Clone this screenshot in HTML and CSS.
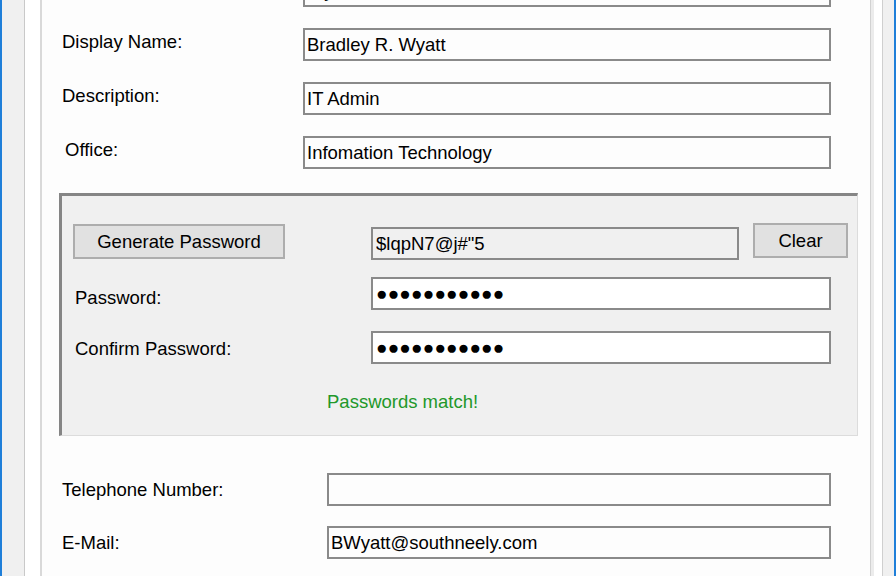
FILE: index.html
```html
<!DOCTYPE html>
<html lang="en">
<head>
<meta charset="utf-8">
<title>New User</title>
<link rel="stylesheet" href="styles.css">
</head>
<body>
<div class="window">
  <div class="frame-left">
    <div class="accent"></div>
    <div class="side"></div>
    <div class="gutter"></div>
  </div>
  <main class="client">
    <div class="row row-top">
      <div class="lbl lbl-up"></div>
      <input class="tb" type="text" value="Wyatt" readonly>
    </div>
    <div class="row">
      <label class="lbl lbl-up">Display Name:</label>
      <input class="tb" type="text" value="Bradley R. Wyatt" readonly>
    </div>
    <div class="row">
      <label class="lbl lbl-up">Description:</label>
      <input class="tb" type="text" value="IT Admin" readonly>
    </div>
    <div class="row">
      <label class="lbl lbl-up lbl-office">Office:</label>
      <input class="tb" type="text" value="Infomation Technology" readonly>
    </div>

    <section class="group">
      <div class="gen-row">
        <button class="btn btn-gen" type="button">Generate Password</button>
        <input class="tb tb-gen" type="text" value="$lqpN7@j#&quot;5" readonly>
        <button class="btn btn-clear" type="button">Clear</button>
      </div>
      <div class="pw-row">
        <label class="lbl-pw lbl-pw1">Password:</label>
        <div class="tb tb-pw">●●●●●●●●●●●</div>
      </div>
      <div class="pw-row pw-row2">
        <label class="lbl-pw lbl-pw2">Confirm Password:</label>
        <div class="tb tb-pw">●●●●●●●●●●●</div>
      </div>
      <p class="match">Passwords match!</p>
    </section>

    <div class="row row-low row-tel">
      <label class="lbl lbl-low">Telephone Number:</label>
      <input class="tb tb-low" type="text" value="" readonly>
    </div>
    <div class="row row-low">
      <label class="lbl lbl-low">E-Mail:</label>
      <input class="tb tb-low" type="text" value="BWyatt@southneely.com" readonly>
    </div>
  </main>
  <div class="frame-right">
    <div class="rail"></div>
    <div class="gap"></div>
    <div class="side side-r"></div>
    <div class="accent"></div>
  </div>
</div>
</body>
</html>
```
FILE: styles.css
```css
html, body {
  margin: 0;
  padding: 0;
  background: #ffffff;
}

body {
  width: 896px;
  height: 576px;
  overflow: hidden;
  font-family: "Liberation Sans", Arial, sans-serif;
  font-size: 18.5px;
  color: #000;
}

.window {
  display: flex;
  width: 896px;
  height: 576px;
  overflow: hidden;
}

/* window frame */
.frame-left,
.frame-right {
  display: flex;
  flex: none;
  height: 100%;
}

.accent {
  width: 2px;
  background: #1f7fd9;
}

.side {
  width: 22px;
  background: #f0f0f0;
  border-right: 1px solid #c9c9c9;
}

.gutter {
  width: 15px;
  background: #ffffff;
  border-right: 2px solid #d9d9d9;
}

.rail {
  width: 3px;
  background: #ececec;
  border-left: 1px solid #d2d2d2;
}

.gap {
  width: 8px;
  background: #ffffff;
}

.side-r {
  width: 11px;
  border-right: none;
  border-left: 1px solid #cfcfcf;
}

/* client area */
.client {
  flex: 1;
  display: flex;
  flex-direction: column;
  background: #fdfdfd;
  min-width: 0;
}

.row {
  display: flex;
  align-items: center;
  height: 33px;
  padding-left: 20px;
  margin-bottom: 21px;
  flex: none;
}

.row-top {
  margin-top: -26px;
}

.lbl {
  width: 241px;
  flex: none;
  line-height: 21px;
  min-height: 21px;
}

.lbl-up {
  margin-bottom: 7px;
}

.lbl-office {
  padding-left: 3px;
  width: 238px;
}

.tb {
  box-sizing: border-box;
  height: 33px;
  width: 528px;
  margin: 0;
  padding: 0 2px;
  border: 2px solid #8a8a8a;
  background: #fdfdfd;
  font: inherit;
  color: #000;
  outline: none;
  flex: none;
}

/* password group box */
.group {
  box-sizing: border-box;
  margin: 3px 12px 0 17px;
  height: 243px;
  padding: 27px 8px 0 11px;
  background: #f0f0f0;
  border-style: solid;
  border-width: 3px 1px 1px 3px;
  border-color: #858585 #dcdcdc #dcdcdc #858585;
  flex: none;
}

.gen-row {
  display: flex;
  align-items: flex-start;
  height: 37px;
}

.btn {
  box-sizing: border-box;
  height: 35px;
  margin: 0;
  padding: 0;
  border: 2px solid #adadad;
  background: #e1e1e1;
  font: inherit;
  color: #000;
  flex: none;
}

.btn-gen {
  width: 212px;
  margin-top: 1px;
}

.tb-gen {
  width: 368px;
  margin-left: 86px;
  margin-top: 4px;
  padding-left: 3px;
  background: #f0f0f0;
}

.btn-clear {
  width: 95px;
  margin-left: 14px;
}

.pw-row {
  display: flex;
  align-items: center;
  height: 33px;
  margin-top: 17px;
}

.pw-row2 {
  margin-top: 21px;
}

.lbl-pw {
  width: 296px;
  padding-left: 2px;
  line-height: 21px;
  flex: none;
}

.lbl-pw1 {
  margin-top: 7px;
}

.lbl-pw2 {
  margin-top: 2px;
}

.tb-pw {
  width: 460px;
  display: flex;
  align-items: center;
  padding-left: 3px;
  background: #ffffff;
  font-size: 19px;
  letter-spacing: 0.2px;
}

.match {
  margin: 27px 0 0 254px;
  line-height: 21px;
  color: #22982a;
}

/* lower fields */
.row-tel {
  margin-top: 37px;
  margin-bottom: 20px;
}

.lbl-low {
  width: 265px;
}

.tb-low {
  width: 504px;
}
```
